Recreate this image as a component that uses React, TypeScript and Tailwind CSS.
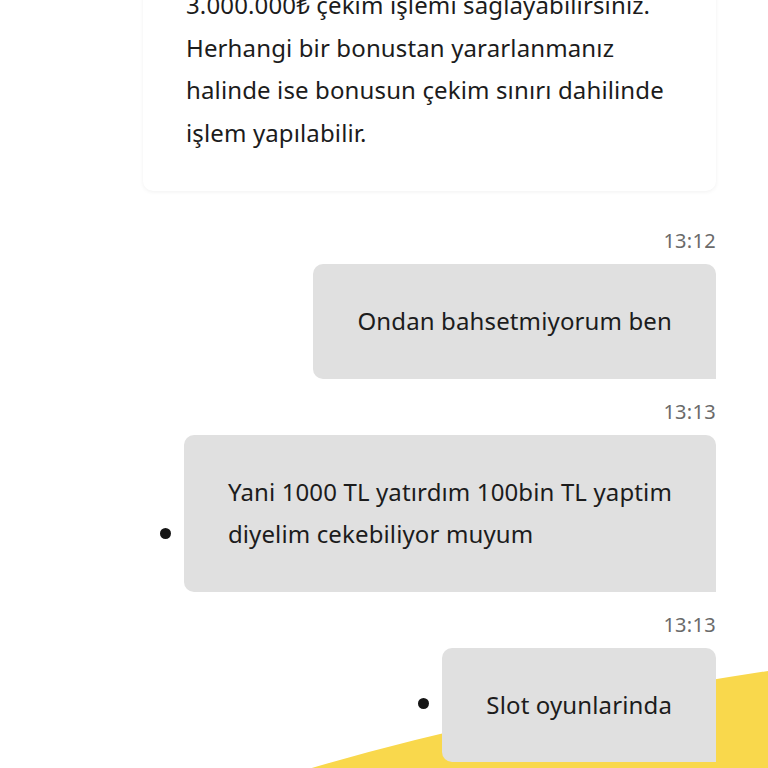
import React from 'react';

type Message = {
  time: string;
  lines: string[];
  dot?: boolean;
};

const messages: Message[] = [
  { time: '13:12', lines: ['Ondan bahsetmiyorum ben'] },
  { time: '13:13', lines: ['Yani 1000 TL yatırdım 100bin TL yaptim', 'diyelim cekebiliyor muyum'], dot: true },
  { time: '13:13', lines: ['Slot oyunlarinda'], dot: true },
];

const Bubble: React.FC<{ message: Message }> = ({ message }) => (
  <div className="flex flex-col items-end">
    <div className="mt-[19px] text-[20px] leading-[28px] tracking-[0.3px] text-[#6a6a6a]">{message.time}</div>
    <div className="mt-[9px] flex items-end gap-[13px]">
      {message.dot && <span className="mb-[53px] h-[11px] w-[11px] rounded-full bg-[#151515]" />}
      <div className="rounded-t-[10px] rounded-bl-[10px] bg-[#e0e0e0] px-[44px] py-[36px] text-[24px] leading-[42.5px] tracking-[0.13px] text-[#1c1c1c]">
        {message.lines.map((line, i) => (
          <div key={i}>{line}</div>
        ))}
      </div>
    </div>
  </div>
);

export default function App() {
  return (
    <div
      className="relative h-[768px] w-[768px] overflow-hidden bg-white"
      style={{ fontFamily: '"Noto Sans", "Open Sans", sans-serif' }}
    >
      <svg className="absolute inset-0" width="768" height="768" viewBox="0 0 768 768">
        <path d="M305 770 Q500 712 768 671 L768 768 L305 768 Z" fill="#f9d84c" />
      </svg>

      <div className="relative flex flex-col pr-[52px]">
        <div className="-mt-[16px] ml-[143px] rounded-b-[10px] bg-white px-[43px] pb-[37px] text-[24px] leading-[42.5px] tracking-[0.13px] text-[#1c1c1c] shadow-[0_1px_4px_rgba(0,0,0,0.06)]">
          <div>3.000.000₺ çekim işlemi sağlayabilirsiniz.</div>
          <div>Herhangi bir bonustan yararlanmanız</div>
          <div>halinde ise bonusun çekim sınırı dahilinde</div>
          <div>işlem yapılabilir.</div>
        </div>

        <div className="mt-[17px]">
          {messages.map((m, i) => (
            <Bubble key={i} message={m} />
          ))}
        </div>
      </div>
    </div>
  );
}
